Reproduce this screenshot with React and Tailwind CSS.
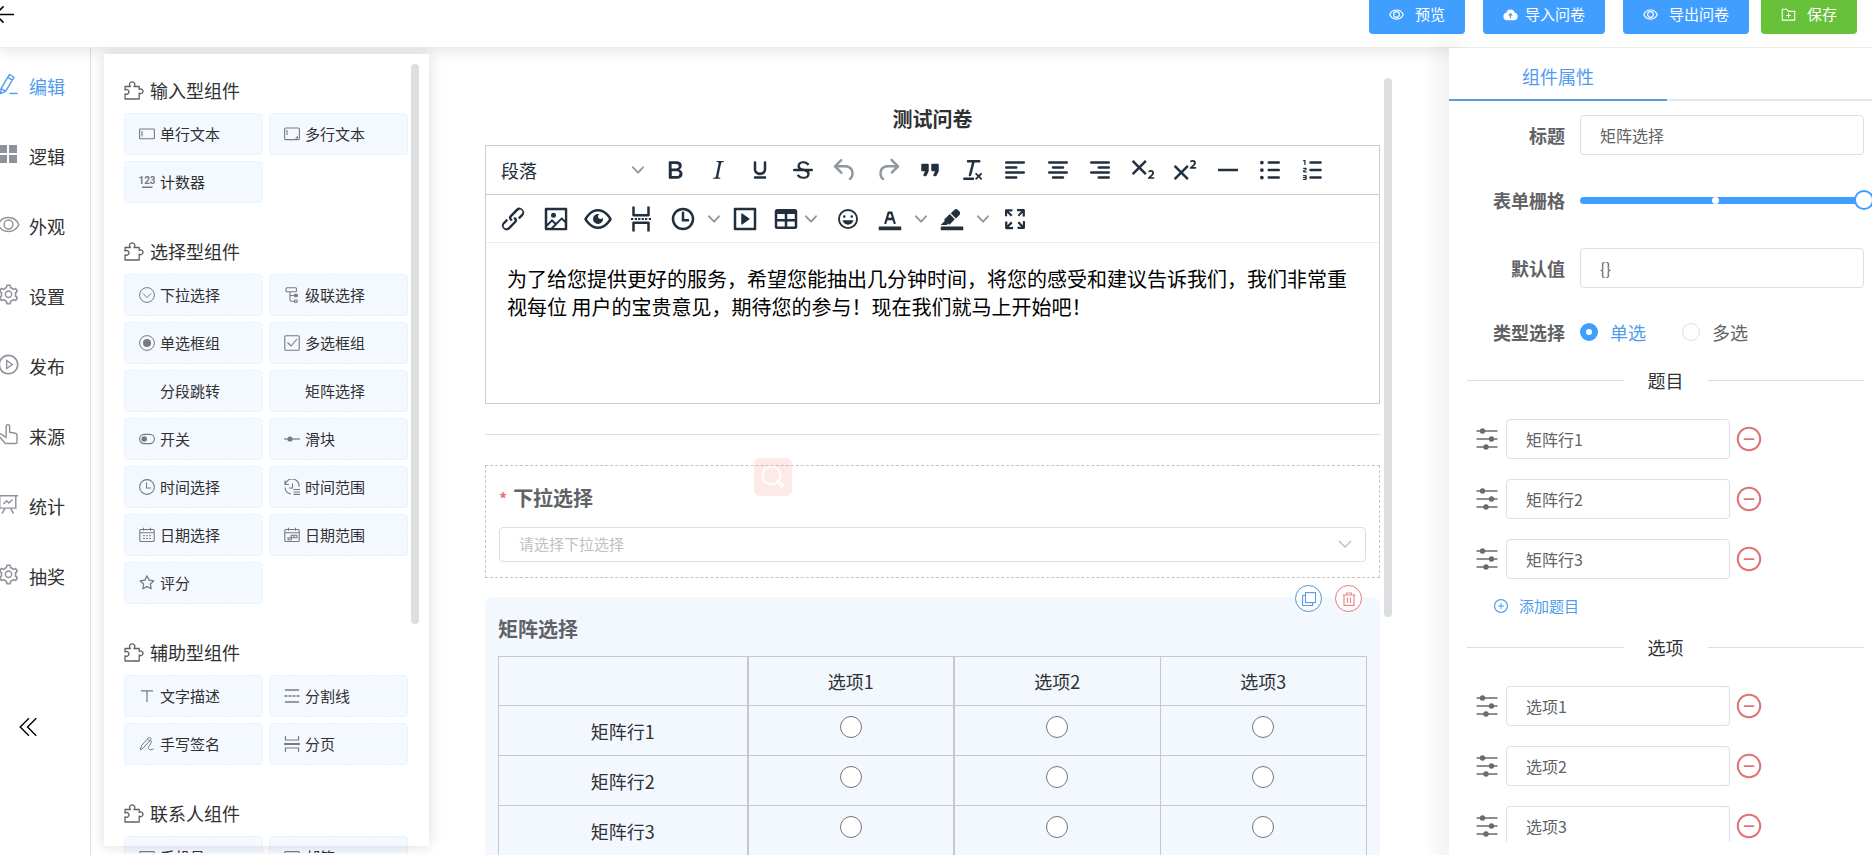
import React from "react";
import {
  AiOutlineSetting,
  AiOutlinePlayCircle,
  AiOutlineStar,
  AiOutlinePlusCircle,
  AiOutlineMinusCircle,
} from "react-icons/ai";

/* ---------- icons ---------- */

function Line({ size = 24, sw = 2, box = 24, className = "", children }) {
  return (
    <svg
      width={size}
      height={size}
      viewBox={`0 0 ${box} ${box}`}
      fill="none"
      stroke="currentColor"
      strokeWidth={sw}
      className={`shrink-0 ${className}`}
      aria-hidden="true"
    >
      {children}
    </svg>
  );
}

function Solid({ d, size = 30, className = "" }) {
  return (
    <svg width={size} height={size} viewBox="0 0 24 24" fill="currentColor" className={`shrink-0 ${className}`} aria-hidden="true">
      {d.map((p) => (
        <path key={p} d={p} fillRule="evenodd" />
      ))}
    </svg>
  );
}

const Eye = ({ size, sw = 1.6 }) => (
  <Line size={size} sw={sw}>
    <path d="M1.2 12C3.2 7.4 7.2 4.7 12 4.7S20.8 7.4 22.8 12C20.8 16.6 16.8 19.3 12 19.3S3.2 16.6 1.2 12z" />
    <circle cx="12" cy="12" r="4.6" />
  </Line>
);

const PenLine = () => (
  <Line size={22} sw={1.5}>
    <path d="M13.6 1.600l5 3-9.200 15.500-5.600 2.400.6-5.400zM11.800 4.700l5 3M4.600 17l4.800 3" strokeLinejoin="round" />
    <path d="M13.500 22.300h9" />
  </Line>
);

const Grid4 = () => (
  <svg width="22" height="22" viewBox="0 0 22 22" fill="currentColor" className="shrink-0" aria-hidden="true">
    <path d="M2 2h8v8H2zM12 2h8v8h-8zM2 12h8v8H2zM12 12h8v8h-8z" />
  </svg>
);

const Hand = () => (
  <Line size={22} sw={1.6}>
    <path
      d="M10 14V3.8c0-2.600 3.800-2.600 3.800 0V10l6.400 1.2c1 .2 1.600 1 1.600 2V21c0 .8-.6 1.400-1.400 1.400H9.200L2.400 14.800c-1.400-1.800 1-3.600 2.600-2.400L10 16"
      strokeLinejoin="round"
      strokeLinecap="round"
    />
  </Line>
);

const Board = () => (
  <Line size={22} sw={1.6}>
    <path d="M1 3h22M3 3v13.500h17.500V3M8.500 17l-3 5.500M15 17l3 5.500" />
    <path d="M7 12l3.500-3.500L13 11l4-4" />
  </Line>
);

const Puzzle = () => (
  <Line size={20} sw={1.3} box={20}>
    <path
      d="M1 6.500h5.400a2.700 2.700 0 1 1 3.600 0h5.200v3a2.300 2.300 0 1 1 0 3.600V19H1v-5.200a2.400 2.400 0 1 0 0-3.800z"
      strokeLinejoin="round"
    />
  </Line>
);

const itemIcons = {
  input: (
    <Line size={16} sw={1.1} box={16}>
      <rect x="0.6" y="3" width="14.8" height="9.8" rx="0.6" />
      <path d="M3 5v5.500" />
    </Line>
  ),
  textarea: (
    <Line size={16} sw={1.1} box={16}>
      <rect x="0.6" y="2" width="14.8" height="11.6" rx="1" />
      <path d="M3 4v5" />
      <path d="M14 9.500v3h-3z" fill="currentColor" stroke="none" />
    </Line>
  ),
  number: (
    <svg width="16" height="16" viewBox="0 0 16 16" fill="currentColor" className="shrink-0" aria-hidden="true">
      <text x="8" y="10" textAnchor="middle" className="font-['Roboto'] text-[10px] font-bold">
        123
      </text>
      <path d="M3 12.500h10.500V14H3z" />
    </svg>
  ),
  select: (
    <Line size={16} sw={1} box={16}>
      <circle cx="8" cy="8" r="7.4" />
      <path d="M4 6.500l4 4 4-4" />
    </Line>
  ),
  cascade: (
    <Line size={16} sw={1.1} box={16}>
      <rect x="2" y="0.8" width="10.500" height="4" rx="1" />
      <path d="M6 5v8c0 .8.4 1.200 1.200 1.200h3.500M6 8.500h5" />
      <rect x="10.500" y="7.300" width="2.800" height="2.400" rx="0.8" fill="currentColor" />
      <rect x="10.500" y="13" width="2.800" height="2.400" rx="0.8" />
    </Line>
  ),
  radio: (
    <Line size={16} sw={1} box={16}>
      <circle cx="8" cy="8" r="7.4" />
      <circle cx="8" cy="8" r="4" fill="currentColor" stroke="none" />
    </Line>
  ),
  checkbox: (
    <Line size={16} sw={1.1} box={16}>
      <rect x="0.8" y="0.8" width="14.4" height="14.4" rx="1" />
      <path d="M3.500 7.500L7 11l6-7" />
    </Line>
  ),
  toggle: (
    <Line size={16} sw={1.1} box={16}>
      <rect x="0.6" y="3.4" width="14.8" height="9.2" rx="4.6" />
      <circle cx="5.2" cy="8" r="2.8" fill="currentColor" stroke="none" />
    </Line>
  ),
  slider: (
    <Line size={16} sw={1.2} box={16}>
      <path d="M0 8h16" />
      <circle cx="6" cy="8" r="2.6" fill="currentColor" stroke="none" />
    </Line>
  ),
  time: (
    <Line size={16} sw={1.1} box={16}>
      <circle cx="8" cy="8" r="7.4" />
      <path d="M7.500 3.500V9H12" />
    </Line>
  ),
  timeRange: (
    <Line size={16} sw={1.1} box={16}>
      <path d="M1 1.500v4h4M1.300 5.200A7 7 0 0 1 15 8M1 8.500a7 7 0 0 0 6 6.500M8.500 4.500V9H5" />
      <path d="M9.500 10.500H16M9.500 13H16M9.500 15.400H16" />
    </Line>
  ),
  date: (
    <Line size={16} sw={1.1} box={16}>
      <rect x="0.8" y="2.500" width="14.4" height="12" rx="1" />
      <path d="M1 5.800h14M4.500 0.800v3M11.500 0.800v3" />
      <path d="M4 8.700h8M4 11.500h8" strokeDasharray="2 1" />
    </Line>
  ),
  dateRange: (
    <Line size={16} sw={1.1} box={16}>
      <rect x="0.8" y="2.500" width="14.4" height="12" rx="1" />
      <path d="M1 5.800h14M4.500 0.800v3M11.500 0.800v3" />
      <path d="M13 8.200H7.200v2.600H4v2h3.200v-2M7.200 10.800H13V8.200M10 8.200v2.600" />
    </Line>
  ),
  star: <AiOutlineStar size={18} className="-mx-px shrink-0" />,
  text: (
    <Line size={16} sw={1.2} box={16}>
      <path d="M2 2.800h12M8 2.800V14" />
    </Line>
  ),
  divider: (
    <Line size={16} sw={1.7} box={16}>
      <path d="M1 2h14M1 14h14" />
      <path d="M0.500 8h15" strokeDasharray="3 1" />
    </Line>
  ),
  sign: (
    <Line size={16} sw={1} box={16}>
      <path
        d="M1.500 13.500l1-4L9.500 1.800c1.200-1 3.200.4 2.200 2L4.500 11.700zM8.500 3l2.200 2M12 4.500c2.500 1.500-3.500 5.500-2.500 8 .8 1.800 3.500 1.500 5 .5"
        strokeLinecap="round"
      />
    </Line>
  ),
  page: (
    <Line size={16} sw={1.2} box={16}>
      <path d="M1.500 0v4h13V0M1.500 16v-4h13v4" />
      <path d="M0 8h16" strokeWidth="2" />
    </Line>
  ),
  phone: (
    <Line size={16} sw={1.2} box={16}>
      <rect x="0.6" y="2.6" width="14.8" height="11" rx="1" />
    </Line>
  ),
  none: <span className="w-4 shrink-0" />,
};

const Sliders = () => (
  <Line size={22} sw={1.6} box={22} className="text-[#6b6b6b]">
    <path d="M0.500 3H21.500M0.500 11H21.500M0.500 19H21.500" />
    <g fill="currentColor" stroke="none">
      <circle cx="6.500" cy="3" r="2.7" />
      <circle cx="15.500" cy="11" r="2.7" />
      <circle cx="10" cy="19" r="2.7" />
    </g>
  </Line>
);

/* ---------- editor toolbar ---------- */

const tool = {
  bold: ["M7.800 19c-.3 0-.5 0-.6-.2l-.2-.5V5.700c0-.2 0-.4.2-.5l.6-.2h5c1.500 0 2.700.3 3.500 1 .7.6 1.100 1.400 1.100 2.500a3 3 0 0 1-.6 1.900c-.4.6-1 1-1.600 1.200.4.1.9.3 1.300.6s.8.7 1 1.200c.4.4.5 1 .5 1.600 0 1.300-.4 2.300-1.300 3-.8.7-2.100 1-3.800 1H7.800zm5-8.300c.6 0 1.200-.1 1.600-.5.4-.3.6-.7.6-1.300 0-1.100-.8-1.700-2.300-1.700H9.300v3.500h3.400zm.5 6c.7 0 1.300-.1 1.700-.4.4-.4.6-.9.6-1.500s-.2-1-.7-1.400c-.4-.3-1-.4-2-.4H9.400v3.800h4z"],
  italic: ["M16.700 4.700l-.1.9h-.3c-.6 0-1 0-1.400.3-.3.3-.4.6-.5 1.100l-2.100 9.800v.6c0 .5.4.8 1.400.8h.2l-.2.800H8l.2-.8h.2c1.100 0 1.800-.5 2-1.500l2-9.800.1-.5c0-.6-.4-.8-1.400-.8h-.3l.2-.9h5.800z"],
  underline: [
    "M16 5c.6 0 1 .4 1 1v5.500a4 4 0 0 1-.4 1.800l-1 1.400a5.300 5.300 0 0 1-5.500 1 5 5 0 0 1-1.600-1c-.5-.4-.8-.9-1.100-1.400a4 4 0 0 1-.4-1.800V6c0-.6.4-1 1-1s1 .4 1 1v5.500c0 .3 0 .6.2 1l.6.7a3.300 3.300 0 0 0 2.200.8 3.400 3.400 0 0 0 2.200-.8c.3-.2.4-.5.6-.8l.2-.9V6c0-.6.4-1 1-1z",
    "M8 17h8c.6 0 1 .4 1 1s-.4 1-1 1H8a1 1 0 0 1 0-2z",
  ],
  strike: [
    "M15.600 8.500c-.5-.7-1-1.100-1.300-1.300-.6-.4-1.300-.6-2-.6-2.700 0-2.800 1.700-2.800 2.100 0 1.600 1.800 2 3.200 2.300 4.400.9 4.600 2.800 4.600 3.900 0 1.400-.7 4.100-5 4.100A6.200 6.200 0 0 1 7 16.400l1.500-1.100c.4.6 1.600 2 3.700 2 1.600 0 2.500-.4 3-1.200.4-.8.3-2-.8-2.600-.7-.4-1.600-.7-2.900-1-1-.2-3.900-.8-3.900-3.600C7.600 6 10.300 5 12.400 5c2.900 0 4.200 1.600 4.700 2.400l-1.500 1.100z",
    "M5 11h14a1 1 0 0 1 0 2H5a1 1 0 0 1 0-2z",
  ],
  undo: ["M6.400 8H12c3.700 0 6.200 2 6.800 5.100.6 2.700-.4 5.600-2.300 6.800a1 1 0 0 1-1-1.800c1.100-.6 1.800-2.700 1.400-4.600-.5-2.100-2.100-3.500-4.900-3.500H6.400l3.300 3.300a1 1 0 1 1-1.400 1.400l-5-5a1 1 0 0 1 0-1.400l5-5a1 1 0 0 1 1.400 1.400L6.400 8z"],
  redo: ["M17.600 10H12c-2.800 0-4.400 1.400-4.900 3.500-.4 2 .3 4 1.400 4.600a1 1 0 1 1-1 1.800c-2-1.200-2.900-4.100-2.300-6.800.6-3 3-5.100 6.800-5.100h5.600l-3.300-3.300a1 1 0 1 1 1.400-1.400l5 5a1 1 0 0 1 0 1.400l-5 5a1 1 0 0 1-1.400-1.400l3.300-3.300z"],
  quote: ["M7.500 17h.9c.4 0 .7-.2.9-.6L11 13V8c0-.6-.4-1-1-1H6a1 1 0 0 0-1 1v4c0 .6.4 1 1 1h2l-1.300 2.700a1 1 0 0 0 .8 1.300zm8 0h.9c.4 0 .7-.2.9-.6L19 13V8c0-.6-.4-1-1-1h-4a1 1 0 0 0-1 1v4c0 .6.4 1 1 1h2l-1.300 2.700a1 1 0 0 0 .8 1.300z"],
  clear: [
    "M13.200 6a1 1 0 0 1 0 .2l-2.600 10a1 1 0 0 1-1 .8h-.2a.8.8 0 0 1-.8-1l2.600-10H8a1 1 0 1 1 0-2h9a1 1 0 0 1 0 2h-3.800z",
    "M5 18h7a1 1 0 0 1 0 2H5a1 1 0 0 1 0-2zm13 1.500L16.500 18 15 19.500a.7.7 0 0 1-1-1l1.500-1.500-1.500-1.500a.7.7 0 0 1 1-1l1.500 1.500 1.500-1.500a.7.7 0 0 1 1 1L17.500 17l1.500 1.500a.7.7 0 0 1-1 1z",
  ],
  left: ["M5 5h14a1 1 0 0 1 0 2H5a1 1 0 1 1 0-2zm0 4h8a1 1 0 0 1 0 2H5a1 1 0 1 1 0-2zm0 8h8a1 1 0 0 1 0 2H5a1 1 0 0 1 0-2zm0-4h14a1 1 0 0 1 0 2H5a1 1 0 0 1 0-2z"],
  center: ["M5 5h14a1 1 0 0 1 0 2H5a1 1 0 1 1 0-2zm3 4h8a1 1 0 0 1 0 2H8a1 1 0 1 1 0-2zm0 8h8a1 1 0 0 1 0 2H8a1 1 0 0 1 0-2zm-3-4h14a1 1 0 0 1 0 2H5a1 1 0 0 1 0-2z"],
  right: ["M5 5h14a1 1 0 0 1 0 2H5a1 1 0 1 1 0-2zm6 4h8a1 1 0 0 1 0 2h-8a1 1 0 0 1 0-2zm0 8h8a1 1 0 0 1 0 2h-8a1 1 0 0 1 0-2zm-6-4h14a1 1 0 0 1 0 2H5a1 1 0 0 1 0-2z"],
  sub: ["M10.400 10l4.600 4.600-1.400 1.400L9 11.400 4.400 16 3 14.600 7.600 10 3 5.400 4.400 4 9 8.600 13.600 4 15 5.400 10.400 10z", "M21 19h-5v-1l1-.8 1.700-1.600c.3-.4.5-.8.5-1.200 0-.3 0-.6-.2-.7-.2-.2-.5-.3-.9-.3a2 2 0 0 0-.8.2l-.7.3-.4-1.100 1-.6 1.200-.2c.8 0 1.400.3 1.800.7.4.4.6.9.6 1.500s-.2 1.100-.5 1.600a8 8 0 0 1-1.300 1.300l-.6.6h2.600V19z"],
  sup: ["M15 9.400L10.400 14l4.600 4.600-1.400 1.400L9 15.400 4.400 20 3 18.600 7.600 14 3 9.400 4.400 8 9 12.600 13.600 8 15 9.400z", "M20.900 11h-5v-1l1-.8 1.700-1.600c.3-.5.5-.9.5-1.300 0-.3 0-.5-.2-.7-.2-.2-.5-.3-.9-.3l-.8.2-.7.4-.4-1.200c.2-.2.5-.4 1-.5.3-.2.8-.2 1.200-.2.8 0 1.400.2 1.800.6.4.4.6 1 .6 1.600 0 .5-.2 1-.5 1.500l-1.300 1.400-.6.5h2.600V11z"],
  hr: ["M4 11h16v2H4z"],
  ul: ["M11 5h8a1 1 0 0 1 0 2h-8a1 1 0 0 1 0-2zm0 6h8a1 1 0 0 1 0 2h-8a1 1 0 0 1 0-2zm0 6h8a1 1 0 0 1 0 2h-8a1 1 0 0 1 0-2zM5.500 4.500a1.500 1.500 0 1 1 0 3 1.500 1.500 0 0 1 0-3zm0 6a1.500 1.500 0 1 1 0 3 1.500 1.500 0 0 1 0-3zm0 6a1.500 1.500 0 1 1 0 3 1.500 1.500 0 0 1 0-3z"],
  ol: ["M10 17h8c.6 0 1 .4 1 1s-.4 1-1 1h-8a1 1 0 0 1 0-2zm0-6h8c.6 0 1 .4 1 1s-.4 1-1 1h-8a1 1 0 0 1 0-2zm0-6h8c.6 0 1 .4 1 1s-.4 1-1 1h-8a1 1 0 1 1 0-2zM6 4v3.500c0 .3-.2.5-.5.5a.5.5 0 0 1-.5-.5V5h-.5a.5.5 0 0 1 0-1H6zm-1 8.800l.2.2h1.300c.3 0 .5.2.5.5s-.2.5-.5.5H4.900a1 1 0 0 1-.9-1V13c0-.4.3-.8.6-1l1.200-.4.2-.3a.2.2 0 0 0-.2-.2H4.500a.5.5 0 0 1-.5-.5c0-.3.2-.5.5-.5h1.600c.5 0 .9.4.9 1v.1c0 .4-.3.8-.6 1l-1.200.4-.2.3zM7 17v2c0 .6-.4 1-1 1H4.500a.5.5 0 0 1 0-1h1.200c.2 0 .3-.1.3-.3 0-.2-.1-.3-.3-.3H4.400a.4.4 0 1 1 0-.8h1.300c.2 0 .3-.1.3-.3 0-.2-.1-.3-.3-.3H4.500a.5.5 0 1 1 0-1H6c.6 0 1 .4 1 1z"],
  link: ["M6.200 12.300a1 1 0 0 1 1.400 1.400l-2.100 2a2 2 0 1 0 2.700 2.800l4.800-4.800a1 1 0 0 0 0-1.400 1 1 0 1 1 1.400-1.300 2.900 2.900 0 0 1 0 4L9.600 20a3.900 3.900 0 0 1-5.500-5.500l2-2z", "M17.800 11.700a1 1 0 0 1-1.400-1.400l2-2a2 2 0 1 0-2.600-2.800L11 10.300a1 1 0 0 0 0 1.400A1 1 0 1 1 9.600 13a2.900 2.900 0 0 1 0-4L14.400 4a3.900 3.900 0 0 1 5.500 5.500l-2 2z"],
  image: ["M5 15.700l3.300-3.200c.3-.3.7-.3 1 0L12 15l4.100-4c.3-.4.8-.4 1 0l2 1.900V5H5v10.700zM5 18V19h3l2.800-2.900-2-2L5 17.900zm14-3l-2.500-2.400-6.400 6.500H19v-4zM4 3h16c.6 0 1 .4 1 1v16c0 .6-.4 1-1 1H4a1 1 0 0 1-1-1V4c0-.6.4-1 1-1zm6 8a2 2 0 1 0 0-4 2 2 0 0 0 0 4z"],
  preview: ["M3.500 12.500c.5.8 1.100 1.600 1.800 2.300 2 2 4.200 3.200 6.700 3.200s4.700-1.200 6.700-3.200a16.200 16.200 0 0 0 2.100-2.800 15.700 15.700 0 0 0-2.100-2.800c-2-2-4.200-3.200-6.700-3.200a9.300 9.300 0 0 0-6.700 3.200A16.200 16.200 0 0 0 3.200 12c0 .2.2.3.3.5zm-2.400-1l.7-1.200L4 7.800C6.200 5.400 8.900 4 12 4c3 0 5.800 1.400 8.100 3.800a18.200 18.200 0 0 1 2.800 3.700v1l-.7 1.200-2.100 2.500c-2.300 2.400-5 3.800-8.100 3.800-3 0-5.800-1.400-8.100-3.800a18.200 18.200 0 0 1-2.800-3.700 1 1 0 0 1 0-1z", "M13.100 8.200a2 2 0 1 0 2.700 2.600 4 4 0 1 1-2.600-2.600z"],
  pagebreak: ["M5 2h2v6h10V2h2v7a1 1 0 0 1-1 1H6a1 1 0 0 1-1-1zM5 22h2v-6h10v6h2v-7a1 1 0 0 0-1-1H6a1 1 0 0 0-1 1z", "M4 11.200h1.800v1.600H4zM7 11.200h1.800v1.600H7zM9.700 11.200h1.800v1.600H9.700zM12.500 11.200h1.800v1.600h-1.800zM15.200 11.200H17v1.600h-1.800zM18.200 11.200H20v1.600h-1.800z"],
  clock: ["M12 19a7 7 0 1 0 0-14 7 7 0 0 0 0 14zm0 2a9 9 0 1 1 0-18 9 9 0 0 1 0 18z", "M16 12h-3V7c0-.6-.4-1-1-1a1 1 0 0 0-1 1v7h5c.6 0 1-.4 1-1s-.4-1-1-1z"],
  embed: ["M4 3h16c.6 0 1 .4 1 1v16c0 .6-.4 1-1 1H4a1 1 0 0 1-1-1V4c0-.6.4-1 1-1zm1 2v14h14V5H5zm4.800 2.600l5.600 4a.5.5 0 0 1 0 .8l-5.600 4A.5.5 0 0 1 9 16V8a.5.5 0 0 1 .8-.4z"],
  table: ["M19 4a2 2 0 0 1 2 2v12a2 2 0 0 1-2 2H5a2 2 0 0 1-2-2V6c0-1.100.9-2 2-2h14zM5 14v4h6v-4H5zm14 0h-6v4h6v-4zm0-6h-6v4h6V8zM5 12h6V8H5v4z"],
  emoji: ["M9 11c.6 0 1-.4 1-1s-.4-1-1-1a1 1 0 0 0-1 1c0 .6.4 1 1 1zm6 0c.6 0 1-.4 1-1s-.4-1-1-1a1 1 0 0 0-1 1c0 .6.4 1 1 1zm-3 5.500c2.100 0 4-1.500 4.400-3.500H7.600c.5 2 2.300 3.500 4.400 3.500zM12 4a8 8 0 1 0 0 16 8 8 0 0 0 0-16zm0 14.500a6.500 6.500 0 1 1 0-13 6.500 6.500 0 0 1 0 13z"],
  color: ["M3 18h18v3H3z", "M8.700 16h-.8a.5.5 0 0 1-.5-.6l2.700-9c.1-.3.3-.4.5-.4h2.800c.2 0 .4.1.5.4l2.700 9a.5.5 0 0 1-.5.6h-.8a.5.5 0 0 1-.4-.4l-.7-2.200c0-.3-.3-.4-.5-.4h-3.400c-.2 0-.4.1-.5.4l-.7 2.200c0 .3-.2.4-.4.4zm2.600-7.600l-.6 2a.5.5 0 0 0 .5.6h1.600a.5.5 0 0 0 .5-.6l-.6-2c0-.3-.3-.4-.5-.4h-.4c-.2 0-.4.1-.5.4z"],
  highlight: ["M3 18h18v3H3z", "M7.700 16.700H3l3.300-3.300-.7-.8L10.200 8l4 4.100-4 4.200c-.2.2-.6.2-.8 0l-.6-.7-1.100 1.100zm5-7.500L11 7.400l3-2.900a2 2 0 0 1 2.600 0L18 6c.7.7.7 2 0 2.700l-2.900 2.900-1.800-1.800-.5-.6"],
  full: ["M15.300 10l-1.200-1.300 2.900-3h-2.300a.9.9 0 1 1 0-1.700H19c.5 0 .9.4.9.9v4.400a.9.9 0 1 1-1.800 0V7l-2.900 3zm0 4l3 3v-2.300a.9.9 0 1 1 1.700 0V19c0 .5-.4.9-.9.9h-4.400a.9.9 0 1 1 0-1.800H17l-3-2.900 1.300-1.200zM10 15.400l-2.900 3h2.300a.9.9 0 1 1 0 1.700H5a.9.9 0 0 1-.9-.9v-4.400a.9.9 0 1 1 1.800 0V17l2.900-3 1.200 1.300zM8.700 10L5.700 7v2.300a.9.9 0 0 1-1.700 0V5c0-.5.4-.9.9-.9h4.400a.9.9 0 0 1 0 1.800H7l3 2.900-1.300 1.200z"],
};

function Caret() {
  return (
    <svg width="12" height="12" viewBox="0 0 10 10" fill="currentColor" className="shrink-0 text-[#222f3e]/50" aria-hidden="true">
      <path d="M8.700 2.200c.3-.3.8-.3 1 0 .4.4.4.9 0 1.200L5.700 7.800c-.3.3-.9.3-1.200 0L.2 3.400a.8.8 0 0 1 0-1.200c.3-.3.8-.3 1.100 0L5 6l3.700-3.800z" />
    </svg>
  );
}

const ToolButton = ({ name, label, disabled }) => (
  <button
    type="button"
    aria-label={label}
    disabled={disabled}
    className="flex h-10 flex-1 items-center justify-center disabled:text-[#222f3e]/50"
  >
    <Solid d={tool[name]} />
  </button>
);

const SplitButton = ({ name, label }) => (
  <div className="flex h-10 w-[62px]">
    <button type="button" aria-label={label} className="flex w-[42px] items-center justify-center">
      <Solid d={tool[name]} />
    </button>
    <button type="button" aria-label={`${label}选项`} className="flex w-5 items-center justify-center">
      <Caret />
    </button>
  </div>
);

const row1 = [
  ["bold", "粗体"],
  ["italic", "斜体"],
  ["underline", "下划线"],
  ["strike", "删除线"],
  ["undo", "撤销", true],
  ["redo", "重做", true],
  ["quote", "引用"],
  ["clear", "清除格式"],
  ["left", "左对齐"],
  ["center", "居中"],
  ["right", "右对齐"],
  ["sub", "下标"],
  ["sup", "上标"],
  ["hr", "水平线"],
  ["ul", "项目列表"],
  ["ol", "编号列表"],
];

function Editor() {
  return (
    <div className="mt-3 border border-[#ccc] text-[#222f3e]">
      <div className="flex h-[49px] items-center border-b border-[#ccc] pl-[15px]">
        <button type="button" className="flex w-[153px] items-center justify-between pr-[10px] text-left text-lg">
          段落
          <Caret />
        </button>
        <div className="flex w-[680px]">
          {row1.map(([name, label, disabled]) => (
            <ToolButton key={name} name={name} label={label} disabled={disabled} />
          ))}
        </div>
      </div>
      <div className="flex h-12 items-center border-b border-[#eee] pl-[6px]">
        <div className="flex w-[170px]">
          <ToolButton name="link" label="链接" />
          <ToolButton name="image" label="图片" />
          <ToolButton name="preview" label="预览" />
          <ToolButton name="pagebreak" label="分页符" />
        </div>
        <SplitButton name="clock" label="插入时间" />
        <div className="flex w-[42px]">
          <ToolButton name="embed" label="媒体" />
        </div>
        <button type="button" aria-label="表格" className="flex h-10 w-[61px] items-center pl-[5px]">
          <Solid d={tool.table} />
          <span className="flex w-5 justify-center">
            <Caret />
          </span>
        </button>
        <div className="flex w-[42px]">
          <ToolButton name="emoji" label="表情" />
        </div>
        <SplitButton name="color" label="文字颜色" />
        <SplitButton name="highlight" label="背景颜色" />
        <div className="flex w-[43px]">
          <ToolButton name="full" label="全屏" />
        </div>
      </div>
      <div
        role="textbox"
        aria-multiline="true"
        aria-label="问卷说明"
        contentEditable
        suppressContentEditableWarning
        className="h-40 px-[21px] pt-[22px] text-xl leading-7 text-black outline-none"
      >
        为了给您提供更好的服务，希望您能抽出几分钟时间，将您的感受和建议告诉我们，我们非常重视每位 用户的宝贵意见，期待您的参与！现在我们就马上开始吧！
      </div>
    </div>
  );
}

/* ---------- left side ---------- */

const nav = [
  ["编辑", <PenLine />],
  ["逻辑", <Grid4 />],
  ["外观", <Eye size={23} sw={1.5} />],
  ["设置", <AiOutlineSetting size={23} className="shrink-0" />],
  ["发布", <AiOutlinePlayCircle size={23} className="shrink-0" />],
  ["来源", <Hand />],
  ["统计", <Board />],
  ["抽奖", <AiOutlineSetting size={23} className="shrink-0" />],
];

function SideNav() {
  return (
    <nav className="flex w-[91px] shrink-0 flex-col border-r border-[#dcdfe6] bg-white pt-[3px]">
      {nav.map(([label, icon], i) => (
        <a
          key={label}
          href="#"
          className={`flex h-[70px] items-center text-lg ${i === 0 ? "text-[#4f9bee]" : "text-[#303133]"}`}
        >
          <span className={`-ml-[3px] flex w-8 pb-1 ${i === 0 ? "" : "text-[#909399]"}`}>{icon}</span>
          {label}
        </a>
      ))}
      <button type="button" aria-label="收起" className="mt-auto mb-[117px] ml-[17px] w-[22px]">
        <Line size={22} sw={1.5}>
          <path d="M13 2.500L3.500 12l9.500 9.500M21 2.500L11.500 12l9.500 9.500" />
        </Line>
      </button>
    </nav>
  );
}

const sections = [
  ["输入型组件", [["单行文本", "input"], ["多行文本", "textarea"], ["计数器", "number"]]],
  [
    "选择型组件",
    [
      ["下拉选择", "select"],
      ["级联选择", "cascade"],
      ["单选框组", "radio"],
      ["多选框组", "checkbox"],
      ["分段跳转", "none"],
      ["矩阵选择", "none"],
      ["开关", "toggle"],
      ["滑块", "slider"],
      ["时间选择", "time"],
      ["时间范围", "timeRange"],
      ["日期选择", "date"],
      ["日期范围", "dateRange"],
      ["评分", "star"],
    ],
  ],
  ["辅助型组件", [["文字描述", "text"], ["分割线", "divider"], ["手写签名", "sign"], ["分页", "page"]]],
  ["联系人组件", [["手机号", "phone"], ["邮箱", "phone"]]],
];

function ComponentPanel() {
  return (
    <aside className="relative z-20 w-[338px] shrink-0 pt-[6px] pb-[9px] pl-[13px]">
      <div className="relative h-full bg-white shadow-[0_0_14px_rgba(0,0,0,0.14)]">
        <div className="h-[calc(100%+7px)] overflow-hidden pt-6 pr-[21px] pl-5">
          {sections.map(([title, items]) => (
            <section key={title} className="mb-9">
              <h2 className="mb-[11px] flex h-6 items-center gap-[6px] text-lg text-[#303133]">
                <span className="text-[#606266]">
                  <Puzzle />
                </span>
                {title}
              </h2>
              <div className="grid grid-cols-2 gap-[6px]">
                {items.map(([label, icon]) => (
                  <button
                    key={label}
                    type="button"
                    className="flex h-[42px] items-center gap-[5px] rounded border border-dashed border-[#409eff]/10 bg-[#409eff]/6 pl-[14px] text-[15px] text-[#303133]"
                  >
                    <span className="flex text-[#777a80]">{itemIcons[icon]}</span>
                    {label}
                  </button>
                ))}
              </div>
            </section>
          ))}
        </div>
        <div className="absolute top-[10px] right-[10px] h-[560px] w-2 rounded-full bg-[#dddee0]" />
      </div>
    </aside>
  );
}

/* ---------- centre ---------- */

const matrixRows = ["矩阵行1", "矩阵行2", "矩阵行3"];
const options = ["选项1", "选项2", "选项3"];

function Survey() {
  return (
    <main className="relative min-w-0 flex-1 overflow-hidden bg-white pt-[57px] pr-[69px] pl-14">
      <h1 className="text-center text-xl leading-7 font-bold text-[#303133]">测试问卷</h1>
      <Editor />
      <hr className="my-[30px] border-[#dcdfe0]" />
      <div className="relative border border-dashed border-[#c4c4c4] px-[13px] pt-[17px] pb-[15px]">
        <label htmlFor="dropdown" className="flex items-center gap-[6px] text-xl leading-[30px] font-bold text-[#606266]">
          <span className="text-base text-[#e77575]">*</span>
          下拉选择
        </label>
        <div className="relative mt-[14px]">
          <select
            id="dropdown"
            defaultValue=""
            className="h-[35px] w-full appearance-none rounded border border-[#dcdfe0] bg-white pl-[19px] text-[15px] text-[#bcc0c8] outline-none"
          >
            <option value="">请选择下拉选择</option>
          </select>
          <Line size={14} sw={1.3} box={14} className="pointer-events-none absolute top-[10px] right-[14px] text-[#b8bcc4]">
            <path d="M1 4l6 6 6-6" />
          </Line>
        </div>
        <div className="absolute -top-2 left-[268px] flex h-[38px] w-[38px] items-center justify-center rounded-md bg-[#f56c6c]/15 text-white">
          <Line size={24} sw={1.7}>
            <circle cx="10.500" cy="10.500" r="9" />
            <path d="M15.500 16.500l1.500-1.500 5.500 5-1.800 2z" strokeLinejoin="round" />
          </Line>
        </div>
      </div>
      <div className="relative mt-[19px] rounded-lg bg-[#f3f8ff] px-[13px] pt-[17px] pb-8">
        <div className="absolute -top-3 right-[18px] flex gap-[13px]">
          <button
            type="button"
            aria-label="复制"
            className="flex h-[27px] w-[27px] items-center justify-center rounded-full border border-[#4a96dc] bg-white text-[#5a9be6]"
          >
            <Line size={14} sw={1.1} box={14}>
              <rect x="3.500" y="0.6" width="10" height="10" />
              <path d="M3.500 3.500H.6v10h10v-3" />
            </Line>
          </button>
          <button
            type="button"
            aria-label="删除"
            className="flex h-[27px] w-[27px] items-center justify-center rounded-full border border-[#dd7b7b] bg-white text-[#e88a8a]"
          >
            <Line size={14} sw={1.2} box={14}>
              <path d="M.5 3h13M4.500 3V1h5v2M2 3v10.300h10V3M5.500 5.500v5.500M8.500 5.500v5.500" />
            </Line>
          </button>
        </div>
        <h2 className="mb-3 text-xl leading-[30px] font-bold text-[#606266]">矩阵选择</h2>
        <table className="w-full table-fixed border-collapse text-lg text-[#303133]">
          <thead>
            <tr className="h-[49px]">
              <td className="w-[249px] border border-r-2 border-[#c8c8c8]" />
              {options.map((o, i) => (
                <th
                  key={o}
                  scope="col"
                  className={`border border-[#c8c8c8] p-0 font-normal ${i === 0 ? "border-r-2" : ""}`}
                >
                  {o}
                </th>
              ))}
            </tr>
          </thead>
          <tbody>
            {matrixRows.map((r) => (
              <tr key={r} className="h-[50px]">
                <th scope="row" className="border border-r-2 border-[#c8c8c8] p-0 font-normal">
                  {r}
                </th>
                {options.map((o, i) => (
                  <td key={o} className={`border border-[#c8c8c8] p-0 pt-[10px] align-top ${i === 0 ? "border-r-2" : ""}`}>
                    <input
                      type="radio"
                      name={r}
                      aria-label={`${r} ${o}`}
                      className="mx-auto block h-[22px] w-[22px] appearance-none rounded-full border border-[#767676] bg-white"
                    />
                  </td>
                ))}
              </tr>
            ))}
          </tbody>
        </table>
      </div>
      <div className="absolute top-[30px] right-[57px] h-[539px] w-2 rounded-full bg-[#dddee0]" />
    </main>
  );
}

/* ---------- right side ---------- */

const labelCls = "w-[116px] shrink-0 text-right text-lg font-bold text-[#606266]";
const inputCls =
  "h-10 min-w-0 rounded border border-[#dcdfe6] bg-white px-[19px] text-base text-[#606266] outline-none";

const Divider = ({ children }) => (
  <div className="mr-2 ml-[18px] flex h-[26px] items-center gap-6 text-lg text-[#303133]">
    <span className="h-px flex-1 bg-[#dcdfe0]" />
    {children}
    <span className="h-px flex-1 bg-[#dcdfe0]" />
  </div>
);

const EditList = ({ items }) => (
  <ul className="mt-[26px] flex flex-col gap-5">
    {items.map((t) => (
      <li key={t} className="flex items-center pl-[27px]">
        <Sliders />
        <input aria-label={t} defaultValue={t} className={`${inputCls} mr-[5px] ml-2 w-[224px]`} />
        <button type="button" aria-label={`删除${t}`} className="text-[#df7272]">
          <AiOutlineMinusCircle size={28} />
        </button>
      </li>
    ))}
  </ul>
);

const RadioOption = ({ label, checked }) => (
  <label className={`mr-9 flex items-center gap-3 text-lg ${checked ? "text-[#4f9bee]" : "text-[#606266]"}`}>
    <input
      type="radio"
      name="kind"
      defaultChecked={checked}
      className="h-[18px] w-[18px] appearance-none rounded-full border border-[#dcdfe6] bg-white checked:border-6 checked:border-[#409eff]"
    />
    {label}
  </label>
);

function Properties() {
  return (
    <aside className="relative z-20 flex w-[423px] shrink-0 flex-col overflow-hidden bg-white pb-[13px]">
      <div className="flex h-[53px] shrink-0 border-b-2 border-[#e4e7ed]" role="tablist">
        <button
          type="button"
          role="tab"
          aria-selected="true"
          className="-mb-[2px] w-[218px] border-b-2 border-[#5a9cdb] pt-1 text-lg text-[#4f9bee]"
        >
          组件属性
        </button>
      </div>
      <div className="min-h-0 flex-1 overflow-hidden pt-[14px]">
        <div className="flex flex-col gap-[26px]">
          <div className="flex h-10 items-center gap-[15px] pr-2">
            <label htmlFor="title" className={labelCls}>
              标题
            </label>
            <input id="title" defaultValue="矩阵选择" className={`${inputCls} flex-1`} />
          </div>
          <div className="mb-[3px] flex h-[38px] items-center gap-[15px]">
            <label htmlFor="span" className={labelCls}>
              表单栅格
            </label>
            <div className="relative -mr-[2px] flex flex-1 items-center">
              <input
                id="span"
                type="range"
                min="1"
                max="24"
                defaultValue="24"
                className="h-[7px] w-full appearance-none rounded-full bg-[#409eff] outline-none [&::-webkit-slider-thumb]:h-5 [&::-webkit-slider-thumb]:w-5 [&::-webkit-slider-thumb]:appearance-none [&::-webkit-slider-thumb]:rounded-full [&::-webkit-slider-thumb]:border-2 [&::-webkit-slider-thumb]:border-[#409eff] [&::-webkit-slider-thumb]:bg-white"
              />
              <span className="pointer-events-none absolute left-[45%] h-[7px] w-[7px] rounded-full bg-white" />
            </div>
          </div>
          <div className="flex h-10 items-center gap-[15px] pr-2">
            <label htmlFor="default" className={labelCls}>
              默认值
            </label>
            <input id="default" defaultValue="{}" className={`${inputCls} flex-1`} />
          </div>
          <div className="flex h-9 items-center gap-[15px]">
            <span className={labelCls}>类型选择</span>
            <div className="flex">
              <RadioOption label="单选" checked />
              <RadioOption label="多选" />
            </div>
          </div>
        </div>
        <div className="mt-[17px]">
          <Divider>题目</Divider>
        </div>
        <EditList items={matrixRows} />
        <button type="button" className="mt-[17px] mb-[18px] ml-11 flex h-5 items-center gap-[10px] text-[15px] text-[#4f9bee]">
          <AiOutlinePlusCircle size={16} />
          添加题目
        </button>
        <Divider>选项</Divider>
        <EditList items={options} />
      </div>
    </aside>
  );
}

/* ---------- page ---------- */

const actionCls = "flex h-[34px] items-center rounded-b px-5 pb-[6px] text-[15px] text-white";

export default function App() {
  return (
    <div className="flex h-screen flex-col overflow-hidden bg-white font-['Noto_Sans_CJK_SC',sans-serif]">
      <header className="relative z-10 flex h-12 shrink-0 items-start justify-between border-b border-[#eeeeee] bg-white pr-[15px] shadow-[0_2px_16px_rgba(0,0,0,0.12)]">
        <button type="button" aria-label="返回" className="mt-[3px] -ml-[7px]">
          <Line size={23} sw={1.6}>
            <path d="M22 12H3M11 3.500L2.500 12l8.500 8.500" />
          </Line>
        </button>
        <div className="flex">
          <button type="button" className={`${actionCls} mr-[18px] gap-[11px] bg-[#409eff]`}>
            <Eye size={15} sw={1.8} />
            预览
          </button>
          <button type="button" className={`${actionCls} mr-[18px] gap-[7px] bg-[#409eff]`}>
            <svg width="15" height="15" viewBox="0 0 24 24" fill="currentColor" aria-hidden="true">
              <path
                fillRule="evenodd"
                d="M18.800 9.200A7 7 0 0 0 5.200 9.200 6 6 0 0 0 6 21h12a6 6 0 0 0 .8-11.800zM11 18v-4.500H8l4-4.500 4 4.500h-3V18z"
              />
            </svg>
            导入问卷
          </button>
          <button type="button" className={`${actionCls} mr-3 gap-[11px] bg-[#409eff]`}>
            <Eye size={15} sw={1.8} />
            导出问卷
          </button>
          <button type="button" className={`${actionCls} gap-[11px] bg-[#67c23a]`}>
            <Line size={15} sw={1.7}>
              <path d="M2 3.500h7l3 3.500h10v14H2zM12 10v7M8.500 13.500h7" />
            </Line>
            保存
          </button>
        </div>
      </header>
      <div className="flex min-h-0 flex-1">
        <SideNav />
        <ComponentPanel />
        <Survey />
        <div className="relative z-10 w-0 shadow-[0_0_22px_10px_rgba(0,0,0,0.07)]" />
        <Properties />
      </div>
    </div>
  );
}
